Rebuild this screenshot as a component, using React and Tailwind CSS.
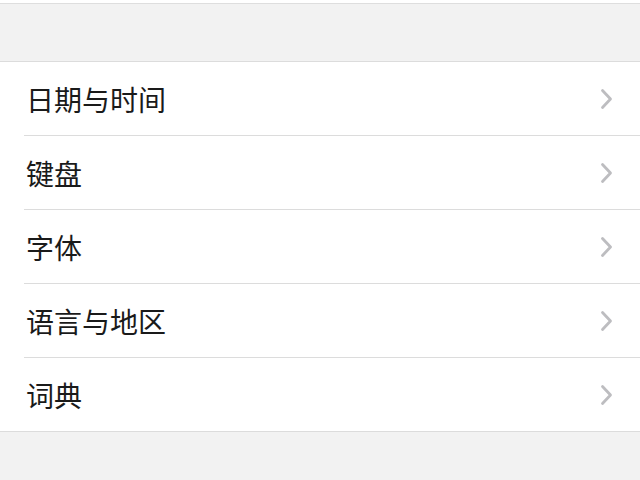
import React from 'react';

const ITEMS = ['日期与时间', '键盘', '字体', '语言与地区', '词典'];

function Chevron() {
  return (
    <svg width="13" height="22" viewBox="0 0 13 22" fill="none" className="shrink-0">
      <path d="M2.5 2.5 L10.5 11 L2.5 19.5" stroke="#bdbdc0" strokeWidth="2.8" strokeLinecap="round" strokeLinejoin="round" />
    </svg>
  );
}

export default function App() {
  return (
    <div
      className="w-[640px] h-[480px] bg-[#f2f2f2] overflow-hidden"
      style={{ fontFamily: '"Noto Sans CJK SC", "Noto Sans", sans-serif' }}
    >
      {/* strip above the group gap */}
      <div className="h-[3px] bg-white border-b border-[#dedede] box-content" />
      <div className="h-[57px]" />

      {/* settings group */}
      <div className="bg-white border-y border-[#dcdcdc]">
        {ITEMS.map((label, i) => (
          <div key={label} className="pl-[24px]">
            <div
              className={`h-[73px] flex items-center justify-between pl-[2px] pr-[27px] ${
                i < ITEMS.length - 1 ? 'border-b border-[#dcdcdc] box-content' : ''
              }`}
            >
              <span className="text-[28px] text-[#1a1a1a] leading-none">{label}</span>
              <Chevron />
            </div>
          </div>
        ))}
      </div>
    </div>
  );
}
